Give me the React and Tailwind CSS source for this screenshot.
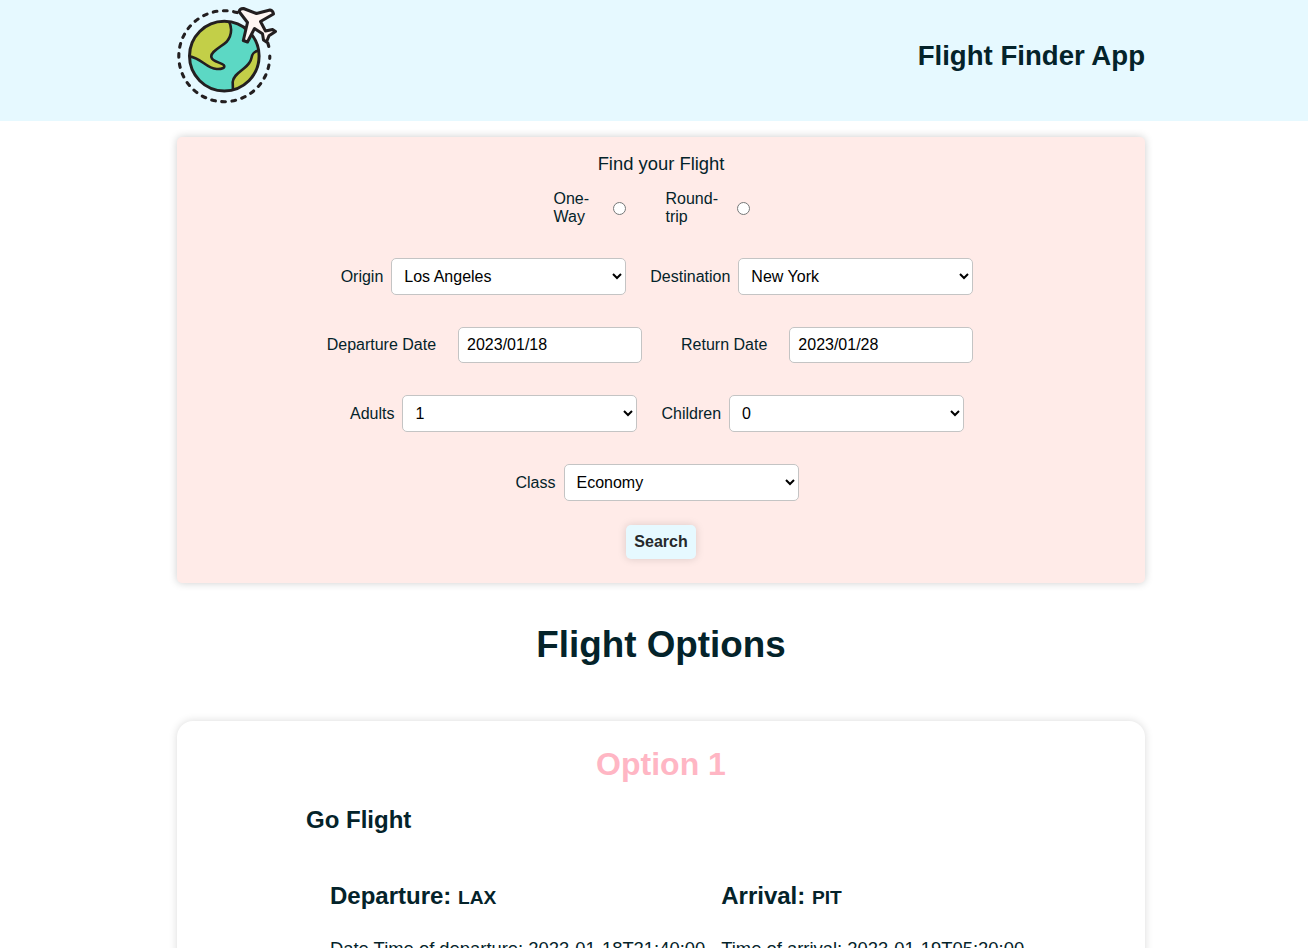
import React from "react";

function Logo() {
  return (
    <svg className="h-[105px] w-[105px] shrink-0" viewBox="174 2 105 105" fill="none" strokeLinecap="round" strokeLinejoin="round">
      <defs>
        <clipPath id="globe">
          <circle cx="224.3" cy="56.1" r="34.8" />
        </clipPath>
      </defs>
      <path d="M269.800 56.100 A45.500 45.500 0 1 1 238.500 13" stroke="#231f20" strokeWidth="3.100" strokeDasharray="3.700 6.510" strokeDashoffset="1.200" />
      <path d="M267.800 43 L268.800 46.500" stroke="#231f20" strokeWidth="3.100" />
      <circle cx="224.3" cy="56.1" r="34.800" fill="#5cd8c4" />
      <g clipPath="url(#globe)" stroke="#231f20" strokeWidth="2.6" fill="#c3cf48">
        <path d="M227 18 C232 25 233 34 226.700 41.700 C221 47 209.500 52 211.500 57.500 C212.500 62 221.500 62.500 223.700 65 C226 68 221 69.300 216.700 69 C205 68 201 56.500 186 55.700 L180 20 Z" />
        <path d="M262 51 L257 51 C250 53.500 253 58 249.500 62.500 C245 70 233.500 73 232.700 82 L233 92 L265 90 Z" />
      </g>
      <circle cx="224.3" cy="56.1" r="34.800" stroke="#231f20" strokeWidth="3" />
      <path d="M239 11.500 Q240 8.300 243.500 8.500 L256.500 13.500 L270 10 Q273 10.500 273.500 14 L260.500 21.500 L265.500 31 L272.500 29.500 L275.500 31.500 L269 35.800 L266.500 42 L263.500 40 L262.500 33.700 L254.500 28.500 L247.500 42 L243.300 40.500 L247.500 22.500 Z" fill="#fff6f3" stroke="#231f20" strokeWidth="3" />
    </svg>
  );
}

function SelectField({ label, options }) {
  return (
    <label className="flex items-center gap-2">
      <span>{label}</span>
      <select className="h-[37px] w-[235px] rounded-[5px] border border-[#c4c4c4] bg-white px-2 text-black">
        {options.map((o) => (
          <option key={o}>{o}</option>
        ))}
      </select>
    </label>
  );
}

function DateField({ label, value }) {
  return (
    <label className="flex items-center gap-[22px]">
      <span>{label}</span>
      <input className="h-9 w-[184px] rounded-[5px] border border-[#c4c4c4] bg-white px-2 text-black" defaultValue={value} />
    </label>
  );
}

export default function App() {
  return (
    <div className="h-[948px] overflow-hidden bg-white font-['Liberation_Sans',Arial,sans-serif] text-base text-[#04232a]">
      <header className="h-[121px] bg-[#e6f9ff]">
        <div className="ml-[174px] flex w-[971px] items-start justify-between pt-0.5">
          <Logo />
          <h1 className="mt-[38px] text-[27.6px] leading-8 font-bold">Flight Finder App</h1>
        </div>
      </header>
      <main className="ml-[177px] w-[968px]">
        <form className="mt-4 flex h-[446px] flex-col items-center rounded-[5px] bg-[#ffebe8] pt-4 shadow-[0_0_8px_rgba(0,0,0,0.2)]">
          <h2 className="text-[18.4px] leading-[22px]">Find your Flight</h2>
          <div className="mt-[15px] flex h-9 gap-10 pr-[19px]">
            <label className="flex items-center">
              <span className="w-[59px] leading-[18px]">One-<br />Way</span>
              <input type="radio" name="trip" className="m-0 h-[13px] w-[13px]" />
            </label>
            <label className="flex items-center">
              <span className="w-[71px] leading-[18px]">Round-<br />trip</span>
              <input type="radio" name="trip" className="m-0 h-[13px] w-[13px]" />
            </label>
          </div>
          <div className="mt-8 flex gap-6 pr-2">
            <SelectField label="Origin" options={["Los Angeles", "New York"]} />
            <SelectField label="Destination" options={["New York", "Los Angeles"]} />
          </div>
          <div className="mt-8 flex gap-[39px] pr-[22px]">
            <DateField label="Departure Date" value="2023/01/18" />
            <DateField label="Return Date" value="2023/01/28" />
          </div>
          <div className="mt-8 flex gap-6 pr-2">
            <SelectField label="Adults" options={["1", "2", "3"]} />
            <SelectField label="Children" options={["0", "1", "2"]} />
          </div>
          <div className="mt-8 flex pr-2">
            <SelectField label="Class" options={["Economy", "Business"]} />
          </div>
          <button type="button" className="mt-6 h-[34px] w-[70px] rounded-[5px] bg-[#e6f9ff] font-bold text-[#26292b] shadow-[0_0_8px_rgba(0,0,0,0.15)]">Search</button>
        </form>
        <h2 className="mt-10 text-center text-[36.8px] leading-[44px] font-bold">Flight Options</h2>
        <section className="mt-[54px] h-[400px] rounded-2xl bg-white px-[129px] pt-[25px] shadow-[0_0_8px_rgba(0,0,0,0.15)]">
          <h3 className="text-center text-[32px] leading-9 font-bold text-[#ffb6c4]">Option 1</h3>
          <h4 className="mt-6 text-2xl leading-7 font-bold">Go Flight</h4>
          <div className="mt-12 flex gap-4 pl-6 whitespace-nowrap">
            <div>
              <h5 className="text-2xl leading-7 font-bold">Departure: <span className="text-[19.2px]">LAX</span></h5>
              <p className="mt-[26px] text-[18.4px] leading-[22px]">Date Time of departure: 2023-01-18T21:40:00</p>
            </div>
            <div>
              <h5 className="text-2xl leading-7 font-bold">Arrival: <span className="text-[19.2px]">PIT</span></h5>
              <p className="mt-[26px] text-[18.4px] leading-[22px]">Time of arrival: 2023-01-19T05:20:00</p>
            </div>
          </div>
        </section>
      </main>
    </div>
  );
}
